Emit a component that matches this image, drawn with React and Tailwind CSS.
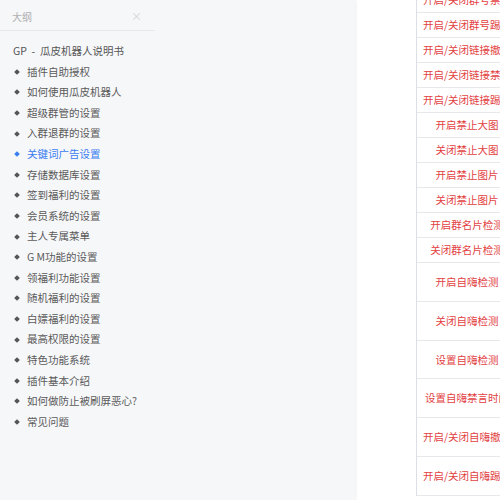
import React from 'react';

const outline = [
  { text: '插件自助授权' },
  { text: '如何使用瓜皮机器人' },
  { text: '超级群管的设置' },
  { text: '入群退群的设置' },
  { text: '关键词广告设置', active: true },
  { text: '存储数据库设置' },
  { text: '签到福利的设置' },
  { text: '会员系统的设置' },
  { text: '主人专属菜单' },
  { text: 'G M功能的设置' },
  { text: '领福利功能设置' },
  { text: '随机福利的设置' },
  { text: '白嫖福利的设置' },
  { text: '最高权限的设置' },
  { text: '特色功能系统' },
  { text: '插件基本介绍' },
  { text: '如何做防止被刷屏恶心?' },
  { text: '常见问题' },
];

const rows = [
  { text: '开启/关闭群号禁言', tall: false },
  { text: '开启/关闭群号踢人', tall: false },
  { text: '开启/关闭链接撤回', tall: false },
  { text: '开启/关闭链接禁言', tall: false },
  { text: '开启/关闭链接踢人', tall: false },
  { text: '开启禁止大图', tall: false },
  { text: '关闭禁止大图', tall: false },
  { text: '开启禁止图片', tall: false },
  { text: '关闭禁止图片', tall: false },
  { text: '开启群名片检测', tall: false },
  { text: '关闭群名片检测', tall: false },
  { text: '开启自嗨检测', tall: true },
  { text: '关闭自嗨检测', tall: true },
  { text: '设置自嗨检测', tall: true },
  { text: '设置自嗨禁言时间', tall: true },
  { text: '开启/关闭自嗨撤回', tall: true },
  { text: '开启/关闭自嗨踢出', tall: true },
];

export default function App() {
  return (
    <div
      className="w-[500px] h-[500px] overflow-hidden bg-white flex text-[10.5px]"
      style={{ fontFamily: '"Noto Sans CJK SC", "Noto Sans", sans-serif' }}
    >
      {/* Outline sidebar */}
      <aside className="w-[355px] shrink-0 h-full bg-[#f6f7f9] shadow-[1px_0_3px_rgba(0,0,0,0.07)]">
        <div className="w-[155px] h-[31px] pt-[3px] flex items-center justify-between pl-[12px] pr-[13px] border-b border-[#e6e8eb]">
          <span className="text-[#b0b0b0] text-[10px]">大纲</span>
          <span className="text-[#d4d4d4] text-[11px]">×</span>
        </div>
        <div className="pt-[10px] leading-[20.6px] text-[#555]">
          <div className="pl-[13px]">GP&nbsp; - &nbsp;瓜皮机器人说明书</div>
          {outline.map(item => (
            <div key={item.text} className="flex items-center pl-[15px]">
              <span className={`w-[4px] h-[4px] rotate-45 mr-[8px] ${item.active ? 'bg-[#3a7ef0]' : 'bg-[#555]'}`} />
              <span className={item.active ? 'text-[#3a7ef0]' : 'text-[#5a5a5a]'}>{item.text}</span>
            </div>
          ))}
        </div>
      </aside>

      {/* Content table */}
      <main className="flex-1 pl-[61px] overflow-hidden">
        <div className="-mt-[12px] w-[150px] border-l border-[#dcdfe3]">
          {rows.map(row => (
            <div
              key={row.text}
              className={`w-[100px] flex items-center justify-center whitespace-nowrap text-[#e2413f] border-b border-[#e6e8eb] ${row.tall ? 'h-[38.8px]' : 'h-[25px]'}`}
            >
              {row.text}
            </div>
          ))}
        </div>
      </main>
    </div>
  );
}
